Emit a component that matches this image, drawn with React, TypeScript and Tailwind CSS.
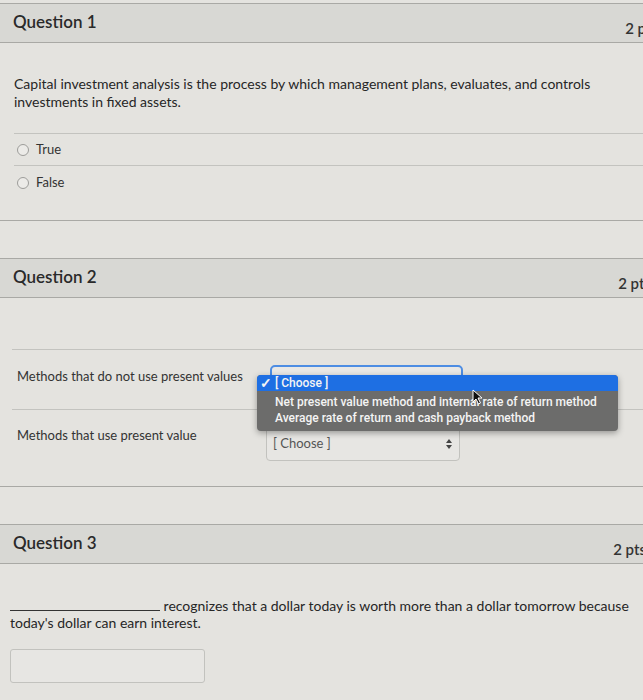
import React from "react";

type HeaderProps = {
  title: string;
  points: string;
  ptsClass: string;
};

function QuestionHeader({ title, points, ptsClass }: HeaderProps) {
  return (
    <div className="flex h-[40px] items-start border-y border-[#a9a9a5] bg-[#d8d8d4] pl-[13px]">
      <h2 className="flex-1 pt-[6px] text-[17px] leading-[24px] font-semibold text-[#2a2a2a]">{title}</h2>
      <span className={`pt-[14px] text-[15px] leading-[20px] font-semibold text-[#333] ${ptsClass}`}>{points}</span>
    </div>
  );
}

function Radio({ label, first }: { label: string; first?: boolean }) {
  return (
    <label
      className={`flex h-[33px] items-center gap-[7px] pl-[3px] text-[13px] text-[#333] ${
        first ? "border-y border-[#c3c3bf]" : ""
      }`}
    >
      <span className="h-[12px] w-[12px] rounded-full border border-[#9d9d9a] bg-[#ecebe8]" />
      {label}
    </label>
  );
}

function CursorArrow() {
  return (
    <svg className="absolute left-[215px] top-[14px]" width="11" height="16" viewBox="0 0 11 16">
      <path d="M1 1 L1 13 L4 10 L6.5 15 L8.5 14 L6 9 L10 9 Z" fill="#111" stroke="#fff" strokeWidth="1" />
    </svg>
  );
}

export default function App() {
  return (
    <div className="h-[700px] w-[643px] overflow-hidden bg-[#e4e3df] font-['Lato',sans-serif]">
      <div className="w-[668px] pt-[3px]">
        {/* Question 1 */}
        <section className="border-b border-[#a9a9a5]">
          <QuestionHeader title="Question 1" points="2 pts" ptsClass="mr-[10px]" />
          <p className="px-[14px] pt-[32px] pr-[50px] text-[14px] leading-[18px] text-[#262626]">
            Capital investment analysis is the process by which management plans, evaluates, and controls
            investments in fixed assets.
          </p>
          <div className="ml-[14px] mt-[22px] pb-[21px]">
            <Radio label="True" first />
            <Radio label="False" />
          </div>
        </section>

        {/* Question 2 */}
        <section className="mt-[37px] border-b border-[#a9a9a5]">
          <QuestionHeader title="Question 2" points="2 pts" ptsClass="mr-[17px]" />
          <div className="h-[51px]" />
          <div className="ml-[12px] flex h-[60px] items-start border-t border-[#c3c3bf]">
            <span className="w-[258px] pl-[5px] pt-[18px] text-[13px] leading-[16px] text-[#333]">
              Methods that do not use present values
            </span>
            <div className="relative mt-[15px]">
              <div className="h-[34px] w-[193px] rounded-[5px] border-2 border-[#4d8de3] bg-[#e9e8e5]" />
              <div className="absolute left-[-13px] top-[10px] z-10 h-[56px] w-[361px] rounded-[4px] bg-[#6c6c6b] font-['Roboto',sans-serif] text-[12px] leading-[15px] font-medium text-[#f4f4f4] shadow-[0_2px_6px_rgba(0,0,0,0.35)]">
                <div className="flex h-[16px] items-center rounded-t-[4px] bg-[#1e6fe3] pl-[3px]">
                  <span className="w-[15px] text-[14px] font-bold">✓</span>
                  <span>[ Choose ]</span>
                </div>
                <div className="pl-[18px] pt-[4px]">Net present value method and internal rate of return method</div>
                <div className="pl-[18px] pt-[1px]">Average rate of return and cash payback method</div>
                <CursorArrow />
              </div>
            </div>
          </div>
          <div className="ml-[12px] flex h-[77px] items-start border-t border-[#c3c3bf]">
            <span className="w-[254px] pl-[5px] pt-[17px] text-[13px] leading-[16px] text-[#333]">
              Methods that use present value
            </span>
            <div className="mt-[17px] flex h-[34px] w-[194px] items-center justify-between rounded-[4px] border border-[#c2c2be] bg-[#e7e6e3] pl-[6px] pr-[6px]">
              <span className="text-[13px] text-[#555]">[ Choose ]</span>
              <svg width="8" height="12" viewBox="0 0 8 12">
                <path d="M4 1 L7 5 L1 5 Z" fill="#444" />
                <path d="M4 11 L7 7 L1 7 Z" fill="#444" />
              </svg>
            </div>
          </div>
        </section>

        {/* Question 3 */}
        <section className="mt-[37px]">
          <QuestionHeader title="Question 3" points="2 pts" ptsClass="mr-[22px]" />
          <p className="px-[10px] pt-[33px] pr-[30px] text-[14px] leading-[17px] text-[#262626]">
            <span className="inline-block w-[150px] border-b border-[#333]" /> recognizes that a dollar today is
            worth more than a dollar tomorrow because today's dollar can earn interest.
          </p>
          <input
            type="text"
            className="ml-[10px] mt-[18px] h-[34px] w-[195px] rounded-[3px] border border-[#c2c2be] bg-[#e7e6e3]"
          />
        </section>
      </div>
    </div>
  );
}
